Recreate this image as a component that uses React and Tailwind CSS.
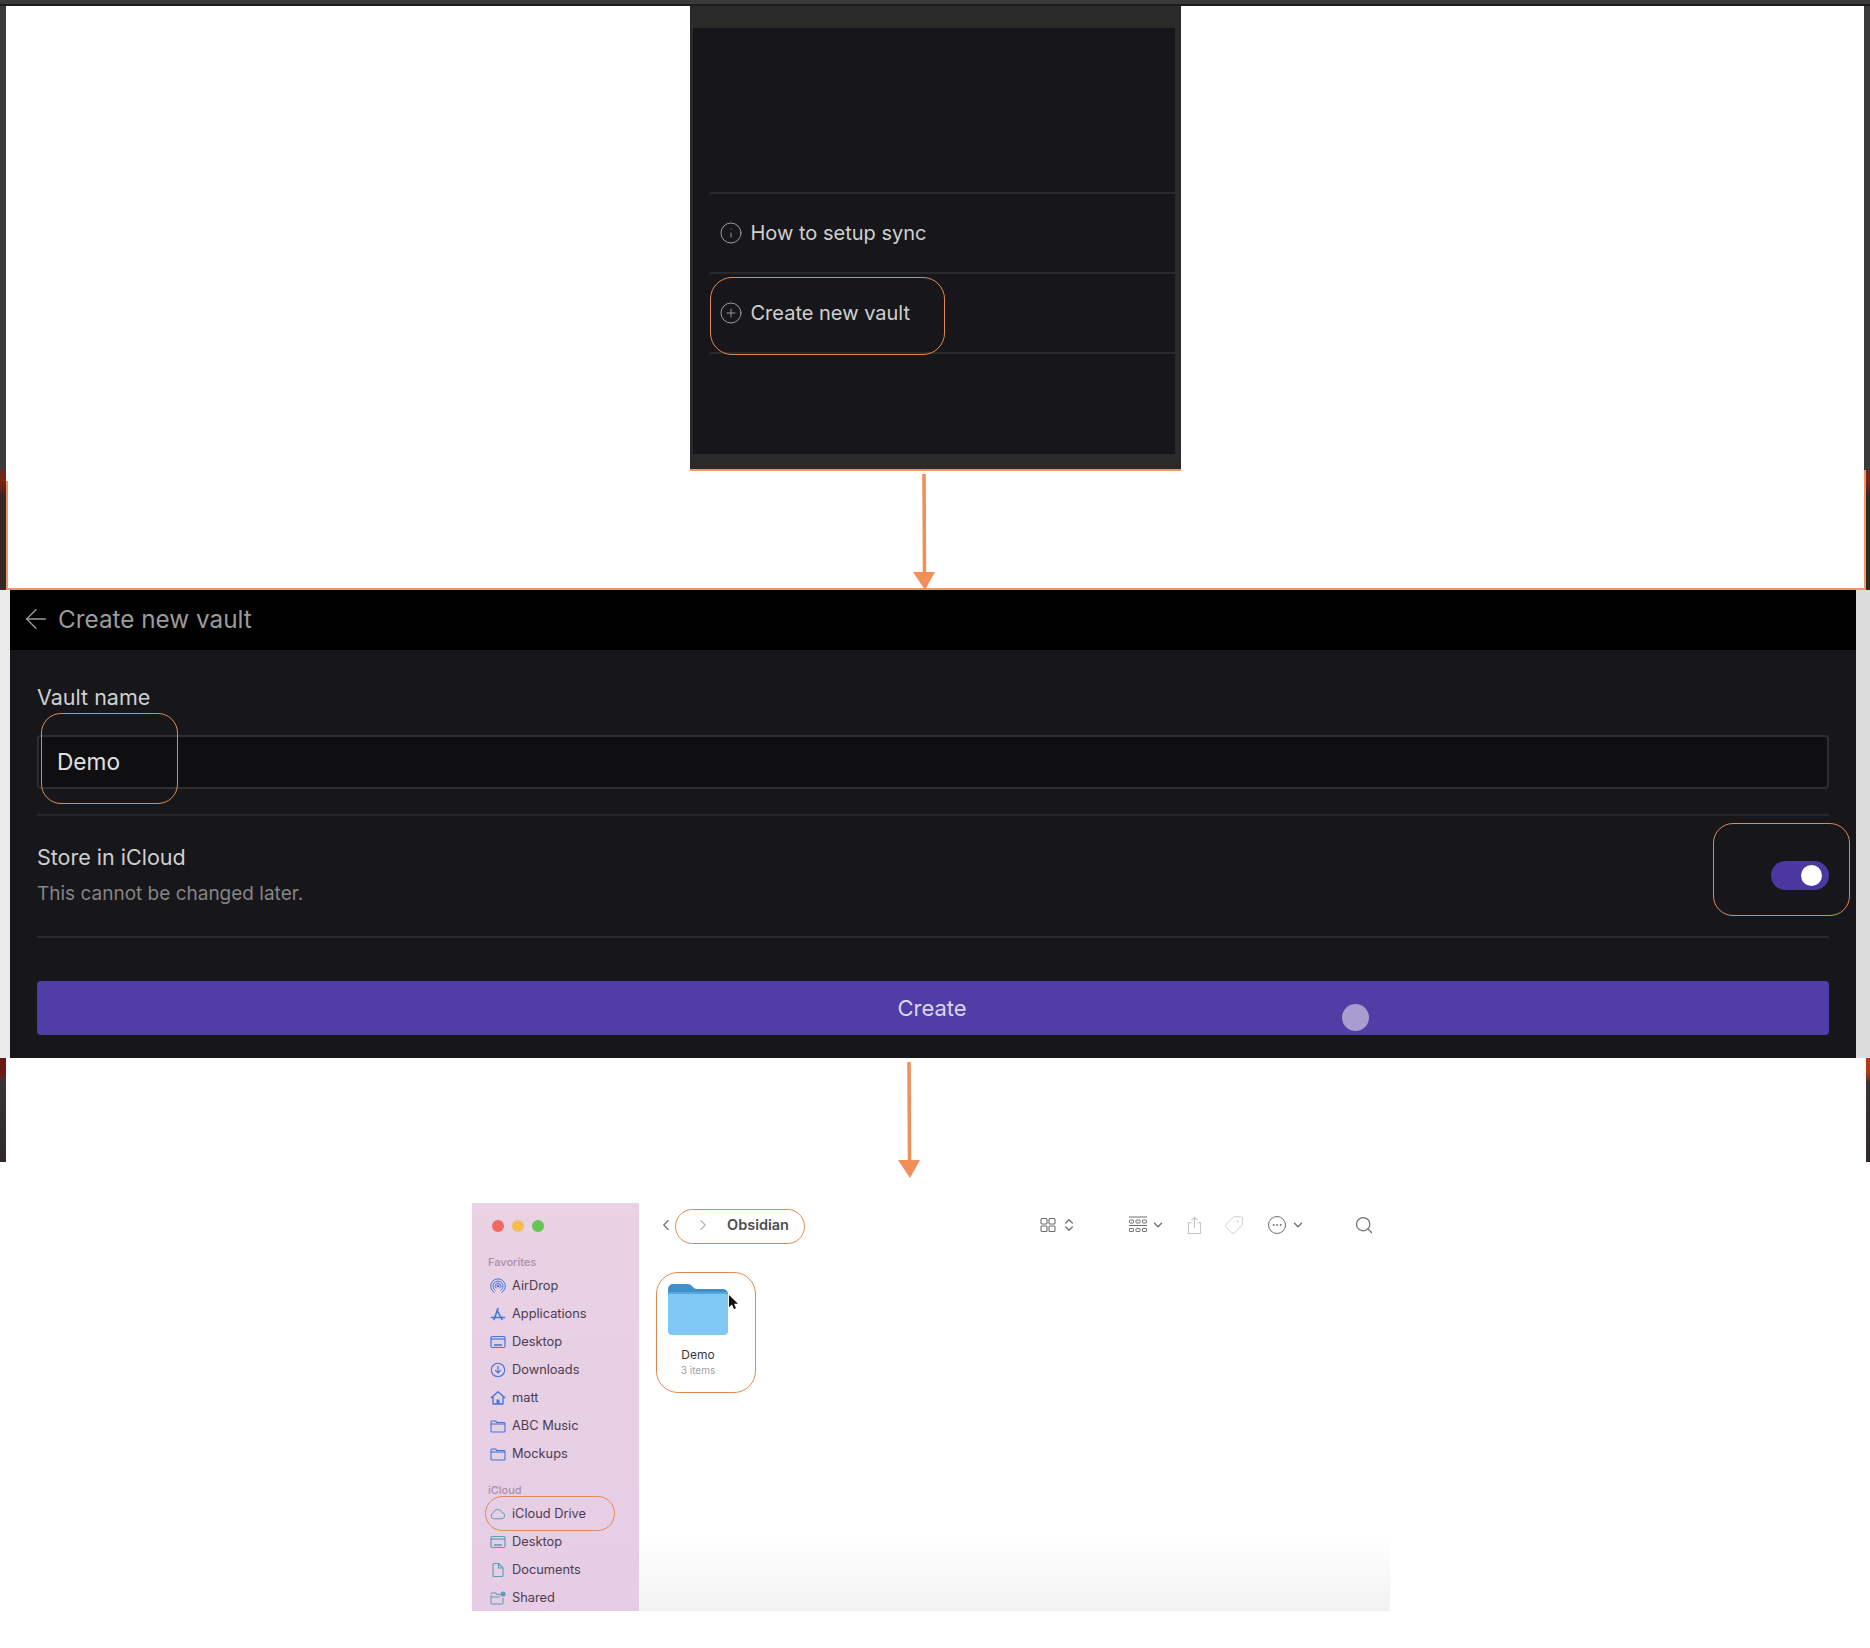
import { ArrowLeft, ChevronDown, ChevronLeft, ChevronRight, ChevronsUpDown, CirclePlus, Ellipsis, Info, Search, Tag } from 'lucide-react';

const favorites = [
  ['AirDrop', AirDropIcon],
  ['Applications', AppsIcon],
  ['Desktop', DesktopIcon],
  ['Downloads', DownloadIcon],
  ['matt', HomeIcon],
  ['ABC Music', FolderIcon],
  ['Mockups', FolderIcon],
];

const icloud = [
  ['iCloud Drive', CloudIcon],
  ['Desktop', DesktopIcon],
  ['Documents', DocIcon],
  ['Shared', SharedIcon],
];

function AirDropIcon() {
  return (
    <svg viewBox="0 0 16 16" className="w-4 h-4" fill="none" stroke="currentColor" strokeWidth="1">
      <path d="M4.6 14.6a7.3 7.3 0 1 1 6.8 0" />
      <path d="M5.4 12.4a5 5 0 1 1 5.2 0" />
      <path d="M6.3 10.3a2.8 2.8 0 1 1 3.4 0" />
      <circle cx="8" cy="8" r="1" fill="currentColor" />
    </svg>
  );
}

function AppsIcon() {
  return (
    <svg viewBox="0 0 16 16" className="w-4 h-4" fill="none" stroke="currentColor" strokeWidth="1.6" strokeLinecap="round">
      <path d="M8 2.5 4 13.5M7 4l5 9.5M1.5 11.5h13" />
    </svg>
  );
}

function DesktopIcon() {
  return (
    <svg viewBox="0 0 16 16" className="w-4 h-4" fill="none" stroke="currentColor" strokeWidth="1.2">
      <rect x="1" y="2.5" width="14" height="11" rx="1.5" />
      <path d="M1 5h14" />
      <path d="M4 11h8" strokeWidth="1.6" />
    </svg>
  );
}

function DownloadIcon() {
  return (
    <svg viewBox="0 0 16 16" className="w-4 h-4" fill="none" stroke="currentColor" strokeWidth="1.1" strokeLinecap="round">
      <circle cx="8" cy="8" r="6.7" />
      <path d="M8 4.2v6.6M5.4 8.4 8 11l2.6-2.6" />
    </svg>
  );
}

function HomeIcon() {
  return (
    <svg viewBox="0 0 16 16" className="w-4 h-4" fill="none" stroke="currentColor" strokeWidth="1.3" strokeLinejoin="round">
      <path d="M.8 8 8 1.8 15.2 8M3 6.5V14h10V6.5" />
      <rect x="6.5" y="9.5" width="3" height="4.5" fill="currentColor" stroke="none" />
    </svg>
  );
}

function FolderIcon() {
  return (
    <svg viewBox="0 0 16 16" className="w-4 h-4" fill="none" stroke="currentColor" strokeWidth="1.1" strokeLinejoin="round">
      <path d="M1 4a1 1 0 0 1 1-1h3.5l1.5 1.5h7a1 1 0 0 1 1 1V13a1 1 0 0 1-1 1H2a1 1 0 0 1-1-1Z" />
      <path d="M1 6h14" />
    </svg>
  );
}

function CloudIcon() {
  return (
    <svg viewBox="0 0 16 16" className="w-4 h-4" fill="none" stroke="currentColor" strokeWidth="1">
      <path d="M4 12.8a3 3 0 0 1-.6-5.9 4.4 4.4 0 0 1 8.4-.6 3.3 3.3 0 0 1 .2 6.5Z" />
    </svg>
  );
}

function DocIcon() {
  return (
    <svg viewBox="0 0 16 16" className="w-4 h-4" fill="none" stroke="currentColor" strokeWidth="1.1" strokeLinejoin="round">
      <path d="M3 2.5a1 1 0 0 1 1-1h4.5L13 6v7.5a1 1 0 0 1-1 1H4a1 1 0 0 1-1-1Z" />
      <path d="M8.5 1.5V6H13" />
    </svg>
  );
}

function SharedIcon() {
  return (
    <svg viewBox="0 0 16 16" className="w-4 h-4" fill="none" stroke="currentColor" strokeWidth="1.1" strokeLinejoin="round">
      <path d="M1 4a1 1 0 0 1 1-1h3.5L7 4.5h3M13 8v5a1 1 0 0 1-1 1H2a1 1 0 0 1-1-1V5M1 7h9" />
      <circle cx="13" cy="4" r="2.6" fill="currentColor" stroke="none" />
    </svg>
  );
}

function GridIcon() {
  return (
    <svg viewBox="0 0 16 16" className="w-[16px] h-[16px]" fill="none" stroke="#6f6f6f" strokeWidth="1.1">
      <rect x="1" y="1.5" width="6" height="5.5" rx="1" />
      <rect x="9" y="1.5" width="6" height="5.5" rx="1" />
      <rect x="1" y="9" width="6" height="5.5" rx="1" />
      <rect x="9" y="9" width="6" height="5.5" rx="1" />
    </svg>
  );
}

function GroupIcon() {
  return (
    <svg viewBox="0 0 20 18" className="w-[20px] h-[18px]" fill="none" stroke="#6f6f6f" strokeWidth="1">
      <path d="M1 1h18M1 9.5h18" />
      <rect x="1.5" y="4" width="4" height="3" rx=".6" />
      <rect x="8" y="4" width="4" height="3" rx=".6" />
      <rect x="14.5" y="4" width="4" height="3" rx=".6" />
      <rect x="1.5" y="12.5" width="4" height="3" rx=".6" />
      <rect x="8" y="12.5" width="4" height="3" rx=".6" />
      <rect x="14.5" y="12.5" width="4" height="3" rx=".6" />
    </svg>
  );
}

function ShareIcon() {
  return (
    <svg viewBox="0 0 16 20" className="w-[15px] h-[19px]" fill="none" stroke="#c4c4c4" strokeWidth="1.1">
      <path d="M5 7H1.5v11.5h13V7H11M8 13V1.5M4.8 4.5 8 1.3l3.2 3.2" />
    </svg>
  );
}

function FolderBig() {
  return (
    <svg viewBox="0 0 60 52" className="w-[60px] h-[52px]">
      <path d="M0 6a5 5 0 0 1 5-5h14c3 0 4 1 6 3s3 2 6 2h24a5 5 0 0 1 5 5v10H0Z" fill="#3f8fcb" />
      <rect x="0" y="9" width="60" height="43" rx="4" fill="#80c8f4" />
      <rect x="0" y="9" width="60" height="2" fill="#5aa6dd" />
    </svg>
  );
}

// orange hand-drawn highlight around a spot on the page
function Ring({ className }) {
  return <div className={`absolute border-[1.5px] border-[#e08a52] ${className}`} />;
}

function Arrow({ className }) {
  return (
    <svg viewBox="0 0 24 116" className={`absolute w-[24px] h-[116px] ${className}`}>
      <path d="M11 0 11.5 102" stroke="#f08f58" strokeWidth="3.5" fill="none" />
      <path d="M0 98h22l-10 18Z" fill="#f08f58" />
    </svg>
  );
}

function SideRow({ label, Icon, tone }) {
  return (
    <div className="h-[28px] flex items-center pl-[18px] gap-[6px]">
      <span className={`flex ${tone}`}>
        <Icon />
      </span>
      <span className="text-[12.8px] text-[#4b3c50]">{label}</span>
    </div>
  );
}

export default function App() {
  return (
    <div className="relative w-[1870px] h-[1648px] overflow-hidden bg-white font-['Inter',sans-serif]">
      {/* mobile menu screen */}
      <div className="h-[590px] flex flex-col">
        <div className="h-[6px] bg-[#3a3a38] border-b-2 border-[#1c1c1c]" />
        <div className="flex-1 flex">
          <div className="w-[6px] bg-[linear-gradient(180deg,#3a3a3a_0%,#3a3a3a_79%,#7a2413_80.5%,#7a2413_81.5%,#352826_84%,#352826_100%)]" />
          <div className="flex-1 flex flex-col items-center border-b-2 border-[#f0956a]">
            <div className="w-[491px] h-[465px] bg-[#2a2a2a] pt-[22px] pb-[15px] pl-[3px] pr-[6px] border-b-2 border-[#f0956a]">
              <div className="h-full bg-[#17161a] pl-[17px] pt-[164px]">
                <div className="h-[80px] flex items-center gap-[8px] pl-[9px] border-t-2 border-[#2a2a2c] text-[#d0d0d0] text-[20px]">
                  <Info size={24} strokeWidth={1} className="text-[#9a9a9a]" />
                  How to setup sync
                </div>
                <div className="h-[80px] flex items-center gap-[8px] pl-[9px] border-t-2 border-[#2a2a2c] text-[#d0d0d0] text-[20px]">
                  <CirclePlus size={24} strokeWidth={1} className="text-[#9a9a9a]" />
                  Create new vault
                </div>
                <div className="border-t-2 border-[#2a2a2c]" />
              </div>
            </div>
          </div>
          <div className="w-[6px] bg-[linear-gradient(180deg,#3a3a3a_0%,#3a3a3a_79%,#7a2413_80.5%,#7a2413_81.5%,#352826_84%,#352826_100%)]" />
        </div>
      </div>

      {/* create vault form */}
      <div className="h-[468px] flex">
        <div className="w-[10px] bg-[#ebebeb]" />
        <div className="flex-1 flex flex-col bg-[#17161a]">
          <div className="h-[60px] bg-black flex items-center gap-[6px] pl-[10px] pb-[2px] text-[#9b9b9b] text-[24.3px]">
            <ArrowLeft size={32} strokeWidth={1} />
            Create new vault
          </div>
          <div className="px-[27px] pt-[33px]">
            <div className="text-[21.5px] leading-[28px] text-[#cfcfcf]">Vault name</div>
            <div className="mt-[24px] h-[54px] flex items-center pl-[18px] bg-[#0f0e11] border-2 border-[#2e2e30] rounded-[4px] text-[22.7px] text-[#e0e0e0]">
              Demo
            </div>
            <div className="mt-[25px] border-t-2 border-[#262629] h-[122px] flex items-start justify-between">
              <div className="pt-[27px]">
                <div className="text-[21.5px] leading-[28px] text-[#cfcfcf]">Store in iCloud</div>
                <div className="mt-[10px] text-[19px] leading-[26px] text-[#858585]">This cannot be changed later.</div>
              </div>
              <div className="mt-[45px] w-[58px] h-[29px] rounded-full bg-[#4a38a0] flex items-center justify-end pr-[7px]">
                <div className="w-[21px] h-[21px] rounded-full bg-white" />
              </div>
            </div>
            <div className="border-t-2 border-[#2a2a2c] pt-[43px]">
              <div className="h-[54px] rounded-[4px] bg-[#513da6] flex items-center justify-center text-[22px] text-[#d9d5ec] pr-[2px]">
                Create
              </div>
            </div>
          </div>
        </div>
        <div className="w-[14px] bg-[#dcdcdc]" />
      </div>

      {/* side edges of the slide */}
      <div className="h-[104px] flex justify-between">
        <div className="w-[6px] bg-[linear-gradient(180deg,#6e1a14_0%,#6e1a14_14%,#3a3434_24%,#2f2728_100%)]" />
        <div className="w-[4px] bg-[linear-gradient(180deg,#b33a15_0%,#b33a15_14%,#3a3434_24%,#2f2728_100%)]" />
      </div>

      {/* finder window */}
      <div className="mt-[41px] ml-[472px] w-[918px] h-[408px] flex bg-[linear-gradient(180deg,#ffffff_0%,#ffffff_82%,#f2f2f3_100%)]">
        <div className="w-[167px] bg-[linear-gradient(180deg,#e8d2e3_0%,#e6cde5_100%)] pt-[17px]">
          <div className="flex gap-[8px] pl-[20px]">
            <div className="w-[12px] h-[12px] rounded-full bg-[#ee6a5f]" />
            <div className="w-[12px] h-[12px] rounded-full bg-[#f3bd4f]" />
            <div className="w-[12px] h-[12px] rounded-full bg-[#62c554]" />
          </div>
          <div className="mt-[22px] pl-[16px] h-[16px] text-[11px] leading-[16px] font-medium text-[#a98fa9]">Favorites</div>
          <div className="mt-[2px]">
            {favorites.map(([label, Icon]) => (
              <SideRow key={label} label={label} Icon={Icon} tone="text-[#3f76dc]" />
            ))}
          </div>
          <div className="mt-[14px] pl-[16px] h-[16px] text-[11px] leading-[16px] font-medium text-[#a98fa9]">iCloud</div>
          <div className="mt-[2px]">
            {icloud.map(([label, Icon]) => (
              <SideRow key={label} label={label} Icon={Icon} tone="text-[#5b9db4]" />
            ))}
          </div>
        </div>
        <div className="flex-1">
          <div className="h-[44px] flex items-center pl-[18px] pr-[16px]">
            <ChevronLeft size={18} strokeWidth={1.5} className="text-[#6a6a6a]" />
            <ChevronRight size={18} strokeWidth={1.5} className="ml-[19px] text-[#b5b5b5]" />
            <span className="ml-[15px] text-[14.5px] font-semibold text-[#4e4e4e]">Obsidian</span>
            <div className="flex-1" />
            <GridIcon />
            <ChevronsUpDown size={16} strokeWidth={2} className="ml-[5px] text-[#6f6f6f]" />
            <div className="ml-[51px]"><GroupIcon /></div>
            <ChevronDown size={14} strokeWidth={2.25} className="ml-[3px] text-[#6f6f6f]" />
            <div className="ml-[22px]"><ShareIcon /></div>
            <Tag size={20} strokeWidth={1} className="ml-[22px] text-[#c4c4c4] rotate-90" />
            <div className="ml-[24px] w-[18px] h-[18px] rounded-full border border-[#6f6f6f] flex items-center justify-center">
              <Ellipsis size={12} strokeWidth={2} className="text-[#6f6f6f]" />
            </div>
            <ChevronDown size={14} strokeWidth={2.25} className="ml-[5px] text-[#6f6f6f]" />
            <Search size={20} strokeWidth={1.5} className="ml-[49px] text-[#6f6f6f]" />
          </div>
          <div className="mt-[36px] ml-[29px] w-[60px] flex flex-col items-center">
            <FolderBig />
            <div className="mt-[12px] text-[12px] leading-[16px] text-[#3a3a3a]">Demo</div>
            <div className="text-[10px] leading-[14px] text-[#a0a0a0] whitespace-nowrap">3 items</div>
          </div>
        </div>
      </div>

      {/* annotations on top */}
      <div className="absolute left-[6px] top-[481px] w-[2px] h-[109px] bg-[#f0956a]" />
      <div className="absolute left-[1864px] top-[470px] w-[2px] h-[120px] bg-[#f0956a]" />
      <Ring className="left-[710px] top-[277px] w-[235px] h-[78px] rounded-[22px]" />
      <Ring className="left-[41px] top-[713px] w-[137px] h-[91px] rounded-[20px]" />
      <Ring className="left-[1713px] top-[823px] w-[137px] h-[93px] rounded-[20px]" />
      <Ring className="left-[675px] top-[1209px] w-[130px] h-[35px] rounded-full" />
      <Ring className="left-[656px] top-[1272px] w-[100px] h-[121px] rounded-[22px]" />
      <Ring className="left-[485px] top-[1496px] w-[130px] h-[35px] rounded-full" />
      <Arrow className="left-[913px] top-[474px]" />
      <Arrow className="left-[898px] top-[1062px]" />
      <div className="absolute left-[1342px] top-[1004px] w-[27px] h-[27px] rounded-full bg-[#a99dd0]" />
      <svg viewBox="0 0 10 16" className="absolute left-[728px] top-[1295px] w-[10px] h-[16px]">
        <path d="M1 0v12l3-2.6L6 14l2-.8-2-4.5h4Z" fill="#111" />
      </svg>
    </div>
  );
}
